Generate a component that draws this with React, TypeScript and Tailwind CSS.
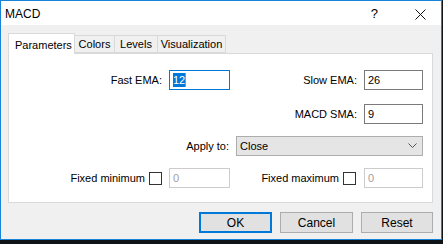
import React from 'react';

const FONT = { fontFamily: '"Liberation Sans", Arial, sans-serif' };

function Field({ value, width, focused, disabled }: { value: string; width: string; focused?: boolean; disabled?: boolean }) {
  const border = focused ? 'border-[#0078d7]' : disabled ? 'border-[#cccccc]' : 'border-[#7a7a7a]';
  return (
    <div className={`${width} h-[20px] border ${border} bg-white flex items-center pl-[3px] text-[11px] ${disabled ? 'text-[#a0a0a0]' : 'text-black'}`}>
      {focused ? (
        <>
          <span className="bg-[#0078d7] text-white leading-[14px]">{value}</span>
          <span className="w-px h-[14px] bg-[#e08a2a]" />
        </>
      ) : (
        value
      )}
    </div>
  );
}

function Tab({ label, width, active }: { label: string; width: string; active?: boolean }) {
  if (active) {
    return (
      <div className={`${width} h-[21px] -mb-px bg-white border border-b-0 border-[#d9d9d9] pl-[6px] pt-[3px] text-[11px] relative z-10`}>
        {label}
      </div>
    );
  }
  return (
    <div className={`${width} h-[18px] border border-l-0 border-[#d9d9d9] bg-[#f0f0f0] flex items-center justify-center text-[11px] mt-[2px] pt-px`}>
      {label}
    </div>
  );
}

export default function App() {
  return (
    <div className="w-[443px] h-[244px] bg-[#0f1419]" style={FONT}>
      <div className="w-[442px] h-[240px] border border-[#1883d7] bg-[#f0f0f0] flex flex-col text-black">
        {/* Title bar */}
        <div className="h-[24px] bg-white flex items-center shrink-0">
          <span className="ml-[4px] text-[12px] mt-[2px]">MACD</span>
          <span className="ml-auto text-[13px] mt-[2px]">?</span>
          <svg className="ml-[37px] mr-[15px] mt-[2px]" width="11" height="11" viewBox="0 0 11 11">
            <path d="M0.5 0.5 L10.5 10.5 M10.5 0.5 L0.5 10.5" stroke="#111" strokeWidth="1" />
          </svg>
        </div>

        {/* Tabs */}
        <div className="flex ml-[7px] mt-[8px] items-start">
          <Tab label="Parameters" width="w-[67px]" active />
          <Tab label="Colors" width="w-[40px]" />
          <Tab label="Levels" width="w-[43px]" />
          <Tab label="Visualization" width="w-[68px]" />
        </div>

        {/* Panel */}
        <div className="ml-[7px] w-[425px] h-[150px] bg-white border border-[#d9d9d9] flex flex-col text-[11px]">
          <div className="flex items-center mt-[16px]">
            <div className="w-[153px] text-right">Fast EMA:</div>
            <div className="ml-[7px]"><Field value="12" width="w-[61px]" focused /></div>
            <div className="w-[127px] text-right">Slow EMA:</div>
            <div className="ml-[7px]"><Field value="26" width="w-[59px]" /></div>
          </div>
          <div className="flex items-center mt-[14px]">
            <div className="w-[348px] text-right">MACD SMA:</div>
            <div className="ml-[7px]"><Field value="9" width="w-[59px]" /></div>
          </div>
          <div className="flex items-center mt-[12px]">
            <div className="w-[220px] text-right">Apply to:</div>
            <div className="ml-[7px] w-[187px] h-[20px] border border-[#adadad] bg-[#e5e5e5] flex items-center pl-[3px]">
              Close
              <svg className="ml-auto mr-[5px]" width="9" height="6" viewBox="0 0 9 6">
                <path d="M0.5 0.5 L4.5 4.5 L8.5 0.5" fill="none" stroke="#555" strokeWidth="1" />
              </svg>
            </div>
          </div>
          <div className="flex items-center mt-[12px]">
            <div className="w-[136px] text-right">Fixed minimum</div>
            <div className="ml-[4px] w-[13px] h-[13px] border border-[#333] bg-white" />
            <div className="ml-[7px]"><Field value="0" width="w-[61px]" disabled /></div>
            <div className="w-[109px] text-right">Fixed maximum</div>
            <div className="ml-[4px] w-[13px] h-[13px] border border-[#333] bg-white" />
            <div className="ml-[8px]"><Field value="0" width="w-[59px]" disabled /></div>
          </div>
        </div>

        {/* Buttons */}
        <div className="flex mt-[9px] ml-[198px] gap-[8px] text-[12px]">
          <button className="w-[73px] h-[21px] border-2 border-[#0078d7] bg-[#e1e1e1]">OK</button>
          <button className="w-[73px] h-[21px] border border-[#adadad] bg-[#e1e1e1]">Cancel</button>
          <button className="w-[72px] h-[21px] border border-[#adadad] bg-[#e1e1e1]">Reset</button>
        </div>
      </div>
    </div>
  );
}
